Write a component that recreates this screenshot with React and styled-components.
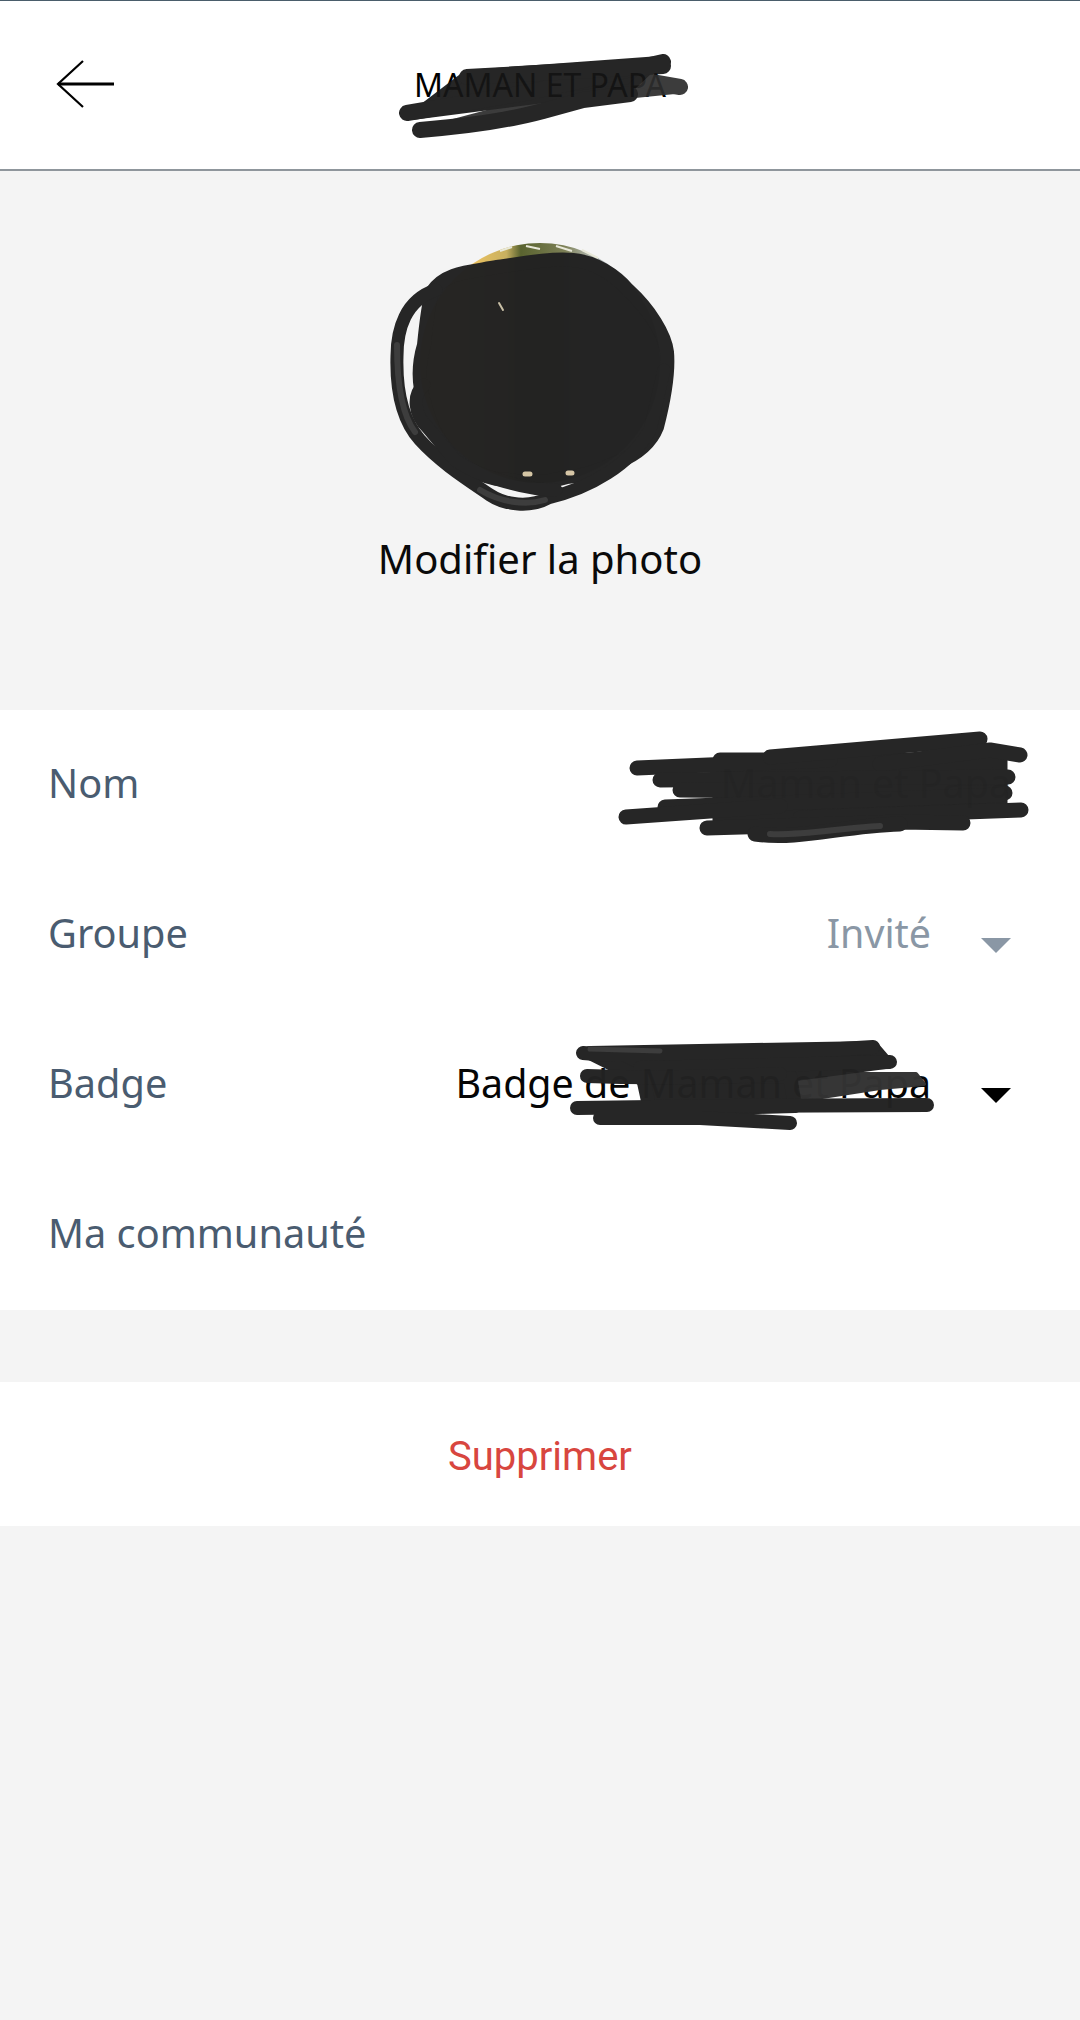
import styled, { createGlobalStyle } from "styled-components"

const Global = createGlobalStyle`
    html, body {
        margin: 0;
        padding: 0;
        background-color: #f4f4f4;
    }
`;

const Page = styled.div`
    position: relative;
    width: 1080px;
    height: 2020px;
    background-color: #f4f4f4;
    font-family: "Noto Sans", sans-serif;
    overflow: hidden;
`;

const Header = styled.header`
    box-sizing: border-box;
    height: 171px;
    display: grid;
    grid-template-columns: 1fr auto 1fr;
    align-items: center;
    padding-left: 56px;
    padding-bottom: 2px;
    background-color: white;
    border-top: solid 1px #4a5d6b;
    border-bottom: solid 2px #8f969c;
`;

const BackArrow = styled.svg`
    width: 60px;
    height: 50px;
    stroke: black;
    fill: none;
`;

const HeaderTitle = styled.h1`
    margin: 0;
    font-size: 32px;
    font-weight: 400;
    color: black;
    transform: translateX(-28px);
    white-space: nowrap;
`;

const PhotoSection = styled.section`
    box-sizing: border-box;
    height: 539px;
    padding-top: 69px;
    display: flex;
    flex-direction: column;
    align-items: center;
`;

const Avatar = styled.svg`
    width: 300px;
    height: 280px;
    display: block;
`;

const ModifyLabel = styled.div`
    margin-top: 12px;
    font-size: 40px;
    line-height: 54px;
    color: #0a0a0a;
`;

const Form = styled.section`
    background-color: white;
`;

const Row = styled.div`
    box-sizing: border-box;
    height: 150px;
    display: flex;
    align-items: center;
    justify-content: space-between;
    padding: 0 69px 5px 48px;
`;

const Label = styled.span`
    font-size: 39.7px;
    color: #4a5c70;
`;

const ValueGroup = styled.div`
    display: flex;
    align-items: center;
    gap: 50px;
`;

const Value = styled.span`
    font-size: 39.4px;
    color: ${(p) => p.$muted ? "#8a97a5" : "#050505"};
`;

const Caret = styled.span`
    width: 0;
    height: 0;
    margin-top: 25px;
    border-left: solid 15px transparent;
    border-right: solid 15px transparent;
    border-top: solid 15px ${(p) => p.$muted ? "#8a97a5" : "black"};
`;

const DeleteButton = styled.button`
    display: block;
    width: 100%;
    height: 144px;
    margin-top: 72px;
    padding: 4px 0 0;
    border: none;
    background-color: white;
    font-family: Roboto, sans-serif;
    font-size: 40px;
    color: #d8463f;
`;

// marker scribbles, drawn over the text in page coordinates
// a bit see-through, the text stays faintly visible like on the screenshot
const Scribble = styled.svg`
    position: absolute;
    left: ${(p) => p.$x}px;
    top: ${(p) => p.$y}px;
    width: ${(p) => p.$w}px;
    height: ${(p) => p.$h}px;
    stroke: ${(p) => p.$ink};
    fill: none;
    stroke-linecap: round;
    stroke-linejoin: round;
    opacity: ${(p) => p.$alpha};
    filter: blur(0.7px);
    pointer-events: none;
`;

function Mark({ x, y, w, h, width, ink = "#222", alpha = 0.98, children }){
    return (
        <Scribble $x={x} $y={y} $w={w} $h={h} $ink={ink} $alpha={alpha} viewBox={`${x} ${y} ${w} ${h}`} strokeWidth={width}>
            {children}
        </Scribble>
    )
}

export default function App(){
    return (
        <Page>
            <Global />
            <Header>
                <BackArrow viewBox="0 0 60 50">
                    <path d="M27 2 L2 25 L27 48" strokeWidth="2.2" />
                    <path d="M2 25 L58 25" strokeWidth="3" />
                </BackArrow>
                <HeaderTitle>MAMAN ET PAPA</HeaderTitle>
                <span />
            </Header>

            <PhotoSection>
                <Avatar viewBox="390 240 300 280">
                    <defs>
                        <linearGradient id="photo" x1="0" y1="0" x2="1" y2="0">
                            <stop offset="0.2" stopColor="#f0c460" />
                            <stop offset="0.36" stopColor="#c8b060" />
                            <stop offset="0.42" stopColor="#59632f" />
                            <stop offset="0.6" stopColor="#7c7f55" />
                            <stop offset="0.72" stopColor="#b4bab4" />
                            <stop offset="0.85" stopColor="#8f9aa5" />
                        </linearGradient>
                    </defs>
                    <circle cx="540" cy="363" r="120" fill="url(#photo)" />
                    <path d="M500 251 L512 247 M526 246 L540 249 M556 246 L572 251 M582 250 L598 258" stroke="#e8e8d8" strokeWidth="2" fill="none" />
                </Avatar>
                <ModifyLabel>Modifier la photo</ModifyLabel>
            </PhotoSection>

            <Form>
                <Row>
                    <Label>Nom</Label>
                    <Value $muted>Maman et Papa</Value>
                </Row>
                <Row>
                    <Label>Groupe</Label>
                    <ValueGroup>
                        <Value $muted>Invité</Value>
                        <Caret $muted />
                    </ValueGroup>
                </Row>
                <Row>
                    <Label>Badge</Label>
                    <ValueGroup>
                        <Value>Badge de Maman et Papa</Value>
                        <Caret />
                    </ValueGroup>
                </Row>
                <Row>
                    <Label>Ma communauté</Label>
                </Row>
            </Form>

            <DeleteButton>Supprimer</DeleteButton>

            {/* titre */}
            <Mark x={390} y={40} w={310} h={110} width={16} ink="#161616" alpha={0.93}>
                <path stroke="#2e2e2e" strokeWidth="3" fill="#2e2e2e" d="M440 124 L560 92 L640 80 L682 84 L680 92 L600 100 L540 110 L470 126 Z" />
                <path stroke="#2e2e2e" d="M640 80 L680 87" />
                <path fill="#161616" strokeWidth="8" d="M467 74 L660 60 L630 88 L520 102 L412 116 Z" />
                <path d="M407 113 L530 92 L663 62" />
                <path d="M467 77 L663 66" />
                <path d="M420 130 C470 126 510 120 543 111 L583 100 L630 94" />
            </Mark>

            {/* photo */}
            <Mark x={380} y={240} w={310} h={280} width={14}>
                <path fill="#222" d="M432 292 C445 272 470 272 497 267 C530 262 555 258 573 260 C595 262 615 275 628 290 C650 310 665 335 667 352 C669 375 664 400 657 427 C650 445 635 455 618 462 C600 470 585 476 567 477 C550 482 530 484 510 480 C490 480 470 472 455 458 C440 445 430 425 425 405 C418 385 418 365 424 345 C426 325 428 305 432 292 Z" />
                <path strokeWidth="13" d="M436 290 C405 300 397 330 397 356 C396 390 402 420 420 440 C440 462 465 478 490 495 C505 505 530 508 548 498 C590 488 630 465 650 430 L664 370" />
                <path strokeWidth="13" d="M424 385 C412 395 414 415 428 428 L455 460 C480 478 530 490 556 490" />
                <path strokeWidth="6" stroke="#3a3a3a" d="M397 345 C397 385 402 415 415 432 M480 490 C500 502 525 506 545 500" />
                <path strokeWidth="2" stroke="#c9c0a8" d="M499 303 L503 310" />
                <path strokeWidth="5" stroke="#d8c8a8" d="M525 474 L530 474 M568 473 L572 473" />
            </Mark>

            {/* nom */}
            <Mark x={610} y={725} w={430} h={125} width={15}>
                <path fill="#222" d="M720 760 L1000 760 L1000 810 L720 820 Z" />
                <path d="M637 768 L830 760" />
                <path d="M770 757 L980 739" />
                <path d="M880 764 L990 750 L1020 755" />
                <path d="M660 780 L1008 777" />
                <path d="M680 790 L1005 793" />
                <path d="M665 807 L1000 795" />
                <path d="M626 817 L780 806" />
                <path d="M800 818 L1021 810" />
                <path d="M707 828 L900 822 L963 823" />
                <path d="M755 834 C800 840 840 826 900 824" />
                <path d="M770 834 C800 836 840 828 880 826" stroke="#3a3a3a" strokeWidth="6" />
            </Mark>

            {/* badge */}
            <Mark x={555} y={1035} w={385} h={105} width={14}>
                <path fill="#333" stroke="#333" strokeWidth="4" d="M780 1074 L916 1074 L924 1084 L880 1088 L790 1102 Z" />
                <path fill="#222" d="M590 1053 L873 1048 L885 1062 L780 1076 L640 1078 Z" />
                <path fill="#222" d="M643 1078 L790 1076 L795 1106 L650 1110 Z" />
                <path d="M583 1053 C640 1058 700 1050 760 1054 L873 1047" />
                <path d="M640 1068 L890 1062" />
                <path d="M587 1076 C640 1078 700 1078 780 1074" />
                <path d="M577 1108 L730 1106 L927 1105" />
                <path d="M600 1118 L700 1118 L790 1123" />
                <path d="M590 1049 L660 1051" stroke="#3a3a3a" strokeWidth="5" />
            </Mark>
        </Page>
    )
}
